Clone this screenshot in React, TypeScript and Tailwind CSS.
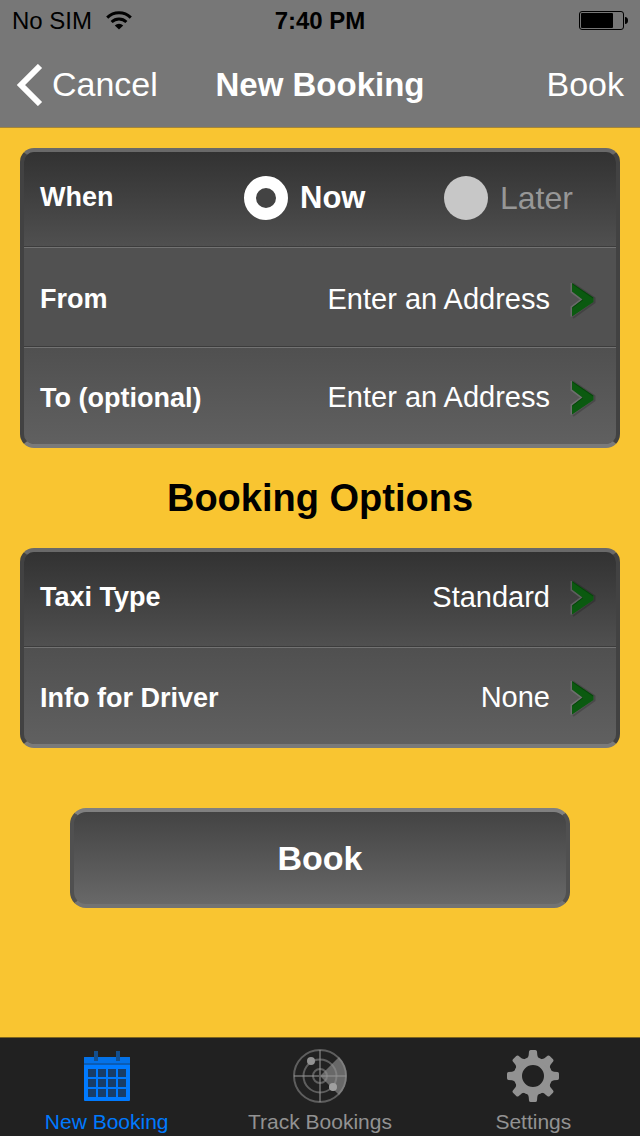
import React, { useState } from 'react';

const WifiSVG = () => (
  <svg width="26" height="20" viewBox="0 0 26 20" fill="none" stroke="#000">
    <path d="M1.2 6.6a17 17 0 0 1 23.6 0" strokeWidth="3" />
    <path d="M5.6 11a10.8 10.8 0 0 1 14.8 0" strokeWidth="3" />
    <path d="M13 18.6 8.8 14.4a6 6 0 0 1 8.4 0z" fill="#000" stroke="none" />
  </svg>
);

const BatterySVG = () => (
  <svg width="49" height="20" viewBox="0 0 49 20">
    <rect
      x="0.5"
      y="0.5"
      width="44"
      height="18"
      rx="2.5"
      fill="none"
      stroke="#000"
    />
    <rect x="2" y="2" width="32" height="15" rx="1" />
    <path d="M46 6c2 0 3 1.5 3 3.5S48 13 46 13z" />
  </svg>
);

const BackSVG = () => (
  <svg width="28" height="42" viewBox="0 0 28 42" fill="none">
    <path d="M24 2 5 21l19 19" stroke="#fff" strokeWidth="6" />
  </svg>
);

const ChevronSVG = () => (
  <svg width="26" height="40" viewBox="0 0 26 40" className="shrink-0">
    <path
      d="M3 3.5 24.5 18v4.500L3 38"
      fill="none"
      stroke="#000"
      strokeOpacity="0.18"
      strokeWidth="2"
    />
    <path
      d="M1.500 36.500v-9.500L11.500 19.500 1.500 12V3"
      fill="none"
      stroke="#999"
      strokeOpacity="0.35"
      strokeWidth="2"
    />
    <path
      d="M2 3 23.500 17.500v4.500L2 36.500v-9L12.500 19.500 2 11.500z"
      fill="#0b5a10"
    />
    <path
      d="M2.500 4 23 18M2.500 27.800 13 19.800"
      fill="none"
      stroke="#053a08"
      strokeOpacity="0.7"
      strokeWidth="1"
    />
  </svg>
);

const CalendarSVG = () => (
  <svg width="46" height="50" viewBox="0 0 46 50">
    <rect y="6" width="46" height="44" rx="1" fill="#007aff" />
    <rect y="6" width="46" height="7" rx="1" fill="#0472e8" />
    <rect y="12" width="46" height="2" fill="#0a5cb5" />
    <rect x="10" width="4" height="10" fill="#124f90" />
    <rect x="32" width="4" height="10" fill="#124f90" />
    {[18, 28, 38].map((y) =>
      [4, 14, 24, 34].map((x) => (
        <rect
          key={`${x}-${y}`}
          x={x}
          y={y}
          width="8"
          height="8"
          fill="#183d68"
        />
      )),
    )}
  </svg>
);

const RadarSVG = () => (
  <svg width="54" height="54" viewBox="0 0 54 54" fill="none">
    <path d="M27 27 46 8a27 27 0 0 1 0 38z" fill="#686868" />
    <g stroke="#929292" strokeOpacity="0.55" strokeWidth="2">
      <circle cx="27" cy="27" r="26" />
      <circle cx="27" cy="27" r="16.500" />
      <circle cx="27" cy="27" r="7" />
      <path d="M27 1v52M1 27h52" />
    </g>
    <circle cx="18" cy="12" r="4" fill="#929292" />
    <circle cx="40" cy="38" r="4" fill="#a0a0a0" />
  </svg>
);

const GearSVG = () => (
  <svg width="52" height="52" viewBox="-26 -26 52 52" fill="#929292">
    <circle r="15" fill="none" stroke="#929292" strokeWidth="8" />
    {[0, 45, 90, 135, 180, 225, 270, 315].map((angle) => (
      <path
        key={angle}
        transform={`rotate(${angle})`}
        d="M-8-16c2-1.500 3.500-3 3.700-5l.3-3.500q.2-1.500 1.700-1.500h4.600q1.500 0 1.700 1.500l.3 3.500c.2 2 1.700 3.500 3.700 5z"
      />
    ))}
  </svg>
);

const CARD =
  'overflow-hidden rounded-[14px] border-4 border-x-[#424242] border-t-[#696969] border-b-[#7a7a7a] bg-[#505050]';

const DIVIDER =
  'border-b border-b-[#727272] shadow-[inset_0_-1px_0_#3c3c3c]';

interface FieldRowProps {
  label: string;
  value: string;
  rowStyle: string;
}

const FieldRow = ({ label, value, rowStyle }: FieldRowProps) => (
  <button
    type="button"
    className={`flex w-full items-center pl-4 pr-5 text-white ${rowStyle}`}
  >
    <span className="text-[27px] font-bold">{label}</span>
    <span className="ml-auto mr-5 text-[29px]">{value}</span>
    <ChevronSVG />
  </button>
);

interface WhenOptionProps {
  label: string;
  checked: boolean;
  onSelect: () => void;
}

const WhenOption = ({ label, checked, onSelect }: WhenOptionProps) => (
  <label
    className={`flex items-center gap-3 leading-[44px] ${checked ? 'text-[31px] font-bold text-white' : 'text-[32px] text-[#979797]'}`}
  >
    <input
      type="radio"
      name="when"
      checked={checked}
      onChange={onSelect}
      className="size-11 shrink-0 appearance-none rounded-full bg-[#c7c7c7] checked:border-12 checked:border-white checked:bg-[#434343]"
    />
    {label}
  </label>
);

const TABS = [
  { label: 'New Booking', icon: <CalendarSVG />, active: true },
  { label: 'Track Bookings', icon: <RadarSVG />, active: false },
  { label: 'Settings', icon: <GearSVG />, active: false },
];

const App = () => {
  const [when, setWhen] = useState('now');

  return (
    <div className="flex min-h-screen flex-col bg-[#f9c531] font-['Liberation_Sans',Arial,sans-serif]">
      <header className="border-b border-[#a3853a] bg-[#777]">
        <div className="grid h-[42px] grid-cols-[1fr_auto_1fr] items-center px-3 text-2xl text-black">
          <span className="flex items-center gap-[14px]">
            No SIM
            <WifiSVG />
          </span>
          <span className="font-bold">7:40 PM</span>
          <span className="flex justify-end">
            <BatterySVG />
          </span>
        </div>
        <nav className="grid h-[85px] grid-cols-[1fr_auto_1fr] items-center px-4 text-[34px] text-white">
          <button type="button" className="flex items-center gap-2">
            <BackSVG />
            Cancel
          </button>
          <h1 className="text-[33px] font-bold">New Booking</h1>
          <button type="button" className="text-right">
            Book
          </button>
        </nav>
      </header>

      <main className="flex-1 px-5 pt-5">
        <section className={CARD}>
          <fieldset
            className={`grid h-24 grid-cols-[1fr_200px_156px] items-center bg-linear-to-b from-[#323232] to-[#505050] px-4 pb-1 ${DIVIDER}`}
          >
            <span className="text-[27px] font-bold text-white">When</span>
            <WhenOption
              label="Now"
              checked={when === 'now'}
              onSelect={() => setWhen('now')}
            />
            <WhenOption
              label="Later"
              checked={when === 'later'}
              onSelect={() => setWhen('later')}
            />
          </fieldset>
          <FieldRow
            label="From"
            value="Enter an Address"
            rowStyle={`h-[100px] bg-[#515151] pt-1 ${DIVIDER}`}
          />
          <FieldRow
            label="To (optional)"
            value="Enter an Address"
            rowStyle="h-24 bg-linear-to-b from-[#505050] to-[#606060] pt-1"
          />
        </section>

        <h2 className="flex h-[100px] items-center justify-center text-[38px] font-bold text-black">
          Booking Options
        </h2>

        <section className={CARD}>
          <FieldRow
            label="Taxi Type"
            value="Standard"
            rowStyle={`h-24 bg-linear-to-b from-[#323232] to-[#505050] pb-1 ${DIVIDER}`}
          />
          <FieldRow
            label="Info for Driver"
            value="None"
            rowStyle="h-24 bg-linear-to-b from-[#505050] to-[#606060] pt-1"
          />
        </section>

        <div className="mt-15 px-[50px]">
          <button
            type="button"
            className="h-[100px] w-full rounded-2xl border-4 border-x-[#505050] border-t-[#808080] border-b-[#737373] bg-linear-to-b from-[#424242] to-[#6a6a6a] bg-origin-border text-[34px] font-bold text-white"
          >
            Book
          </button>
        </div>
      </main>

      <nav className="grid grid-cols-3 border-t border-[#7d651f] bg-[#212121] pt-[10px]">
        {TABS.map(({ label, icon, active }) => (
          <a
            key={label}
            href="#"
            className={`flex flex-col items-center gap-1 text-[21px] leading-7 ${active ? 'text-[#007aff]' : 'text-[#929292]'}`}
          >
            <span className="flex h-14 items-center">{icon}</span>
            {label}
          </a>
        ))}
      </nav>
    </div>
  );
};

export default App;
